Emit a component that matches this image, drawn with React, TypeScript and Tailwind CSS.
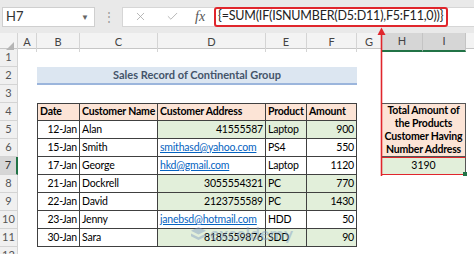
import { X, Check } from 'lucide-react';

type Sale = {
  date: string;
  name: string;
  address: string;
  product: string;
  amount: number;
  isNumber?: boolean;
  isEmail?: boolean;
};

const sales: Sale[] = [
  { date: '12-Jan', name: 'Alan', address: '41555587', product: 'Laptop', amount: 900, isNumber: true },
  { date: '15-Jan', name: 'Smith', address: 'smithasd@yahoo.com', product: 'PS4', amount: 550, isEmail: true },
  { date: '17-Jan', name: 'George', address: 'hkd@gmail.com', product: 'Laptop', amount: 1120, isEmail: true },
  { date: '21-Jan', name: 'Dockrell', address: '3055554321', product: 'PC', amount: 770, isNumber: true },
  { date: '22-Jan', name: 'David', address: '2123755589', product: 'PC', amount: 1430, isNumber: true },
  { date: '23-Jan', name: 'Jenny', address: 'janebsd@hotmail.com', product: 'HDD', amount: 50, isEmail: true },
  { date: '30-Jan', name: 'Sara', address: '8185559876', product: 'SDD', amount: 90, isNumber: true },
];

const columns = ['A', 'B', 'C', 'D', 'E', 'F', 'G', 'H', 'I'];
const rowStarts = [
  'row-start-1', 'row-start-2', 'row-start-3', 'row-start-4', 'row-start-5', 'row-start-6',
  'row-start-7', 'row-start-8', 'row-start-9', 'row-start-10', 'row-start-11', 'row-start-12',
];

const cell = 'flex items-center border-r border-b border-[#404040] px-[2px] whitespace-nowrap overflow-hidden';

function FormulaBar() {
  return (
    <div className="flex h-[33px] items-center bg-[#e9e9e9] pl-[2px]">
      <div className="flex h-[20px] w-[93px] items-center justify-between border border-[#cfcfcf] bg-white pl-[3px] pr-[5px]">
        <span className="text-[13px] text-[#333]">H7</span>
        <span className="text-[8px] text-[#666]">▼</span>
      </div>
      <div className="flex w-[27px] justify-center text-[12px] leading-none text-[#9a9a9a]">⋮</div>
      <div className="flex h-[20px] flex-1 items-center border-y border-l border-[#d6d6d6] bg-white">
        <X className="ml-[11px] h-[13px] w-[13px] text-[#a8a8a8]" strokeWidth={1.5} />
        <Check className="ml-[19px] h-[13px] w-[13px] text-[#a8a8a8]" strokeWidth={1.5} />
        <span className="ml-[16px] font-['Liberation_Serif'] text-[14px] italic text-[#555]">fx</span>
        <div className="ml-[9px] flex h-[20px] w-[234px] items-center rounded-[3px] border-2 border-[#e0262c] pl-[2px] text-[12.5px] tracking-[-0.2px] text-[#222]">
          {'{=SUM(IF(ISNUMBER(D5:D11),F5:F11,0))}'}
        </div>
      </div>
    </div>
  );
}

function ColumnHeaders() {
  return (
    <div className="grid h-[16px] grid-cols-[18px_19px_43px_78px_108px_41px_50px_25px_41px_43px_8px] border-b border-[#c6c6c6] bg-[#f3f3f3] text-[11px] text-[#444]">
      <div className="relative border-r border-[#d4d4d4]">
        <span className="absolute bottom-[2px] right-[3px] h-0 w-0 border-b-[8px] border-l-[8px] border-b-[#b5b5b5] border-l-transparent" />
      </div>
      {columns.map((c) => (
        <div
          key={c}
          className={
            c === 'H' || c === 'I'
              ? 'flex items-center justify-center border-r border-b-2 border-r-[#c4c4c4] border-b-[#217346] bg-[#d6d6d6]'
              : 'flex items-center justify-center border-r border-[#d4d4d4]'
          }
        >
          {c}
        </div>
      ))}
      <div />
    </div>
  );
}

function SalesTable() {
  return (
    <div className="col-start-3 col-span-5 row-start-4 row-span-8 grid grid-cols-[43px_78px_108px_41px_50px] grid-rows-[repeat(8,18px)] text-[10.5px] tracking-[-0.2px] text-black">
      <div className={`${cell} border-l border-t bg-[#fce4d6] font-bold`}>Date</div>
      <div className={`${cell} border-t bg-[#fce4d6] font-bold`}>Customer Name</div>
      <div className={`${cell} border-t bg-[#fce4d6] font-bold`}>Customer Address</div>
      <div className={`${cell} border-t bg-[#fce4d6] font-bold`}>Product</div>
      <div className={`${cell} border-t bg-[#fce4d6] font-bold`}>Amount</div>
      {sales.map((s) => (
        <div key={s.date} className="contents">
          <div className={`${cell} justify-end border-l`}>{s.date}</div>
          <div className={cell}>{s.name}</div>
          <div className={s.isNumber ? `${cell} justify-end bg-[#e2efda]` : cell}>
            {s.isEmail ? <span className="text-[#0563c1] underline underline-offset-1">{s.address}</span> : s.address}
          </div>
          <div className={s.isNumber ? `${cell} bg-[#e2efda]` : cell}>{s.product}</div>
          <div className={s.isNumber ? `${cell} justify-end bg-[#e2efda]` : `${cell} justify-end`}>{s.amount}</div>
        </div>
      ))}
    </div>
  );
}

export default function App() {
  const total = sales.filter((s) => s.isNumber).reduce((sum, s) => sum + s.amount, 0);

  return (
    <div className="relative h-[254px] w-[474px] overflow-hidden bg-white font-['Lato',sans-serif]">
      <FormulaBar />
      <ColumnHeaders />

      <div className="grid grid-cols-[18px_19px_43px_78px_108px_41px_50px_25px_41px_43px_8px] grid-rows-[repeat(12,18px)]">
        {rowStarts.map((r, i) => (
          <div
            key={r}
            className={
              i === 6
                ? `${r} col-start-1 flex items-center justify-center border-b border-r-2 border-b-[#d4d4d4] border-r-[#217346] bg-[#d6d6d6] text-[11px] text-[#333]`
                : `${r} col-start-1 flex items-center justify-center border-b border-r border-[#d4d4d4] bg-[#f0f0f0] text-[11px] text-[#555]`
            }
          >
            {i + 1}
          </div>
        ))}

        <div className="col-start-3 col-span-5 row-start-2 flex items-center justify-center border-b-2 border-[#9bb5dc] bg-[#dce6f1] text-[11px] font-bold text-[#44546a]">
          Sales Record of Continental Group
        </div>

        <SalesTable />

        <div className="col-start-9 col-span-2 row-start-4 row-span-3 flex flex-col items-center justify-center whitespace-nowrap border border-l-0 border-[#555] bg-[#fce4d6] text-center text-[10.5px] font-bold leading-[13px] tracking-[-0.2px] text-black">
          <span>Total Amount of</span>
          <span>the Products</span>
          <span>Customer Having</span>
          <span>Number Address</span>
        </div>

        <div className="relative col-start-9 col-span-2 row-start-7 flex items-center justify-center border-y-[1.5px] border-r border-y-[#e0262c] border-r-[#555] bg-[#e2efda] text-[10.5px] text-black">
          {total}
          <span className="absolute -bottom-[2px] -right-[2px] h-[4px] w-[4px] bg-[#217346]" />
        </div>
      </div>

      <svg className="pointer-events-none absolute left-0 top-0" width="474" height="254">
        <line x1="381.5" y1="33" x2="381.5" y2="176" stroke="#e0262c" strokeWidth="1.6" />
        <polygon points="377.5,35 381.5,27.5 385.5,35" fill="#e0262c" />
      </svg>

      <div className="pointer-events-none absolute left-[190px] top-[225px] flex items-center gap-[3px] text-[#7f9cc3] opacity-45">
        <svg width="17" height="15" viewBox="0 0 18 16">
          <path d="M1 5 L9 1 L17 5 L9 9 Z" fill="#7f9cc3" />
          <path d="M1 8 L9 12 L17 8 L17 11 L9 15 L1 11 Z" fill="#7f9cc3" />
        </svg>
        <span className="text-[17px] font-bold leading-none tracking-[0.3px]">exceldemy</span>
      </div>
    </div>
  );
}
